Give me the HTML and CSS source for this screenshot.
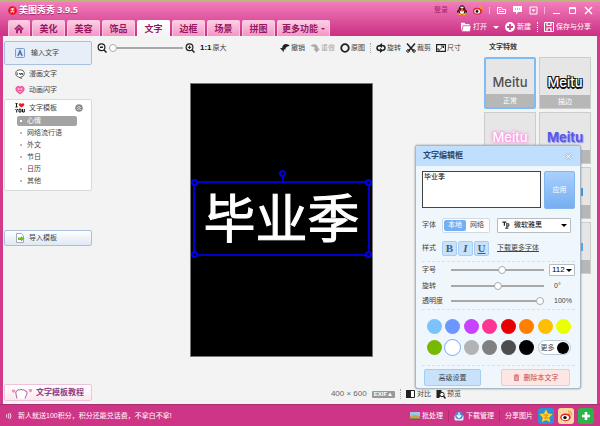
FILE: index.html
```
<!DOCTYPE html>
<html lang="zh-CN">
<head>
    <meta charset="UTF-8">
    <meta name="viewport" content="width=device-width, initial-scale=1.0">
    <title>美图秀秀 3.9.5</title>
    <link rel="stylesheet" href="styles.css">
</head>
<body>
    <header class="header">
        <div class="titlebar">
            <svg class="logo" viewBox="0 0 10 10"><circle cx="5" cy="5" r="4.8" fill="#e8101c"/><path d="M3 3.2l4-.8M5 2.6v2.6M2.8 4.2h4.4M3 6h3.6l-.5 1.8M4.2 6L3 8" stroke="#fff" stroke-width=".8" fill="none"/></svg>
            <h1>美图秀秀 3.9.5</h1>
            <a class="login" href="#">登录</a>
            <svg class="i10" viewBox="0 0 10 10"><ellipse cx="5" cy="5.5" rx="3.6" ry="4" fill="#1b1b22"/><circle cx="5" cy="2.8" r="2.6" fill="#1b1b22"/><path d="M1.500 5L.3 7.500M8.500 5l1.200 2.500" stroke="#1b1b22" stroke-width="1.400"/><ellipse cx="5" cy="6.8" rx="2.2" ry="2.2" fill="#fff"/><path d="M2 4.6q3 1.6 6 0v1.2q-3 1.4-6 0z" fill="#e02020"/><circle cx="4.2" cy="2.4" r=".8" fill="#fff"/><circle cx="5.8" cy="2.4" r=".8" fill="#fff"/><path d="M3.400 3.400h3.200L5 4.400z" fill="#ffb400"/><path d="M1.400 9.200h3M5.600 9.200h3" stroke="#ffb400" stroke-width="1.400"/></svg>
            <svg class="i10 weibo" viewBox="0 0 10 10"><ellipse cx="4.4" cy="6.2" rx="4.4" ry="3.400" fill="#e0202a"/><ellipse cx="4.2" cy="6.4" rx="2.9" ry="2.100" fill="#fff"/><circle cx="4" cy="6.4" r="1.4" fill="#111"/><path d="M6.200 .9q3.400 0 3.100 3.300M6.400 2.6q1.500 0 1.400 1.500" stroke="#f79a1c" stroke-width="1" fill="none"/></svg>
            <i class="bar"></i>
            <button class="win" aria-label="换肤"><svg viewBox="0 0 9 9"><path d="M.5 1.500h4l1 2h3v4h-8zM2 3.500h2M2 5.500h5" fill="none" stroke="#fff"/></svg></button>
            <button class="win" aria-label="反馈"><svg viewBox="0 0 9 9"><path d="M0 0h9v6H5L3 8.500V6H0z" fill="#fff"/><path d="M2 3h1M4 3h1M6 3h1" stroke="#e05a9f"/></svg></button>
            <button class="win" aria-label="菜单"><svg viewBox="0 0 9 9"><path d="M1 1h7v7H1z" fill="none" stroke="#fff"/><path d="M2.500 3.500h4l-2 2.500z" fill="#fff"/></svg></button>
            <i class="bar"></i>
            <button class="win" aria-label="最小化"><svg viewBox="0 0 9 9"><path d="M1 7.500h7" stroke="#fff"/></svg></button>
            <button class="win" aria-label="最大化"><svg viewBox="0 0 9 9"><path d="M1.500 1.500h6v6h-6zM1 2.500h7" fill="none" stroke="#fff"/></svg></button>
            <button class="win" aria-label="关闭"><svg viewBox="0 0 9 9"><path d="M1 1l7 7M8 1L1 8" stroke="#fff" stroke-width="1.4"/></svg></button>
        </div>
        <div class="navrow">
            <nav class="tabs">
                <a class="tab home" href="#" aria-label="首页"><svg viewBox="0 0 10 10"><path d="M.8 5.400L5 1.200l4.200 4.200" fill="none" stroke="#a3246b" stroke-width="1.500"/><path d="M2 5.800L5 3l3 2.800V9.200H6V6.600H4v2.600H2z" fill="#a3246b"/></svg></a>
                <a class="tab" href="#">美化</a>
                <a class="tab" href="#">美容</a>
                <a class="tab" href="#">饰品</a>
                <a class="tab active" href="#">文字</a>
                <a class="tab" href="#">边框</a>
                <a class="tab" href="#">场景</a>
                <a class="tab" href="#">拼图</a>
                <a class="tab more" href="#">更多功能<i class="caret"></i></a>
            </nav>
            <div class="file-actions">
                <button><svg viewBox="0 0 10 10"><path d="M0 9V.8h3.500l1 1.200h4v1.500H2z" fill="#fff"/><path d="M2.200 3.800H10L9 9.500H.8z" fill="#fff" stroke="#d5488f" stroke-width=".5"/></svg>打开<i class="caret"></i></button>
                <button><svg viewBox="0 0 10 10"><circle cx="5" cy="5" r="5" fill="#fff"/><path d="M5 2v6M2 5h6" stroke="#d5408e" stroke-width="1.800"/></svg>新建</button>
                <i class="dots light"></i>
                <button><svg viewBox="0 0 10 10"><path d="M.5.500h9v9h-9z" fill="none" stroke="#fff"/><path d="M3 .5v3h4v-3M3 9.500V6h4v3.500" fill="none" stroke="#fff" stroke-width="1.200"/></svg>保存与分享</button>
            </div>
        </div>
    </header>

    <main class="main">
        <aside class="sidebar">
            <button class="side-btn big">
                <svg viewBox="0 0 10 10"><rect x=".5" y=".5" width="9" height="9" rx="1" fill="#dce8f8" stroke="#7f9cc8"/><path d="M2.800 8L5 2.500 7.200 8M3.600 6h2.800" fill="none" stroke="#4468a8" stroke-width="1.200"/></svg>
                输入文字
            </button>
            <a class="side-link" href="#">
                <svg viewBox="0 0 10 10"><path d="M2 1.500q3-1.500 6 0 2 2 1 4.500-1 2-3.500 2L6.500 9.500 3.500 8Q.5 7 .7 4.500.8 2.500 2 1.500z" fill="#fff" stroke="#555" stroke-width=".9"/><path d="M2.200 3.500v2.500M4 4.500h1.200V6M6 6V4.500h1.500V6" stroke="#222" stroke-width=".8" fill="none"/></svg>
                漫画文字
            </a>
            <a class="side-link" href="#">
                <svg viewBox="0 0 10 10"><path d="M5 9.500Q-1 6 .8 2.500 3-.5 5 1.800 7-.5 9.200 2.500 11 6 5 9.500z" fill="#f3589f"/><path d="M2.500 3l2 1-2 1M7.500 3l-2 1 2 1M3.500 6.500q1.500 1 3 0" stroke="#ffd9ea" stroke-width=".8" fill="none"/></svg>
                动画闪字
            </a>
            <section class="tree">
                <h2>
                    <svg viewBox="0 0 10 10"><path d="M.5.600h2M1.500.600v3.400M.5 4h2" stroke="#111"/><path d="M6.500 4.500Q2.500 2 4.200.5 5.600-.4 6.500 1 7.400-.4 8.800.5 10.500 2 6.500 4.500z" fill="#f01818"/><path d="M.5 6l1.200 1.500L2.900 6M1.700 7.500V9.500M4 6.200h2v2.800H4zM7.500 6v3h1.800V6" stroke="#111" fill="none"/></svg>
                    文字模板
                    <button aria-label="收起"><svg viewBox="0 0 8 8"><circle cx="4" cy="4" r="3.800" fill="#8b8b8b"/><path d="M2.300 4L4 2.300 5.700 4M2.300 6L4 4.300 5.700 6" stroke="#fff" stroke-width=".8" fill="none"/></svg></button>
                </h2>
                <ul>
                    <li class="selected"><a href="#">心情</a></li>
                    <li><a href="#">网络流行语</a></li>
                    <li><a href="#">外文</a></li>
                    <li><a href="#">节日</a></li>
                    <li><a href="#">日历</a></li>
                    <li><a href="#">其他</a></li>
                </ul>
            </section>
            <button class="side-btn import">
                <svg viewBox="0 0 10 10"><path d="M1.500.5h5l2 2v7h-7z" fill="#fff" stroke="#aab"/><path d="M3 4.500h3V3l3.500 2.700L6 8.400V7H3z" fill="#6cc122"/></svg>
                导入模板
            </button>
            <button class="tutorial">
                <svg viewBox="0 0 22 12"><path d="M6 11.500L5 7q-1-3 1-3 .5-2 2.500-1 1.500-1.500 3 0 2-1 2.500 1 2.500-.5 2 2.500l-2 5" fill="#fff" stroke="#9d5796" stroke-width=".9"/><path d="M2.500 6Q0 4 1 2.800q1-.8 1.500.2.5-1 1.500-.2Q5 4 2.500 6zM19.500 5.500Q17 3.500 18 2.300q1-.8 1.500.2.5-1 1.500-.2 1 1.200-1.500 3.200z" fill="#f48cb8"/></svg>
                文字模板教程
            </button>
        </aside>

        <section class="work">
            <div class="toolbar">
                <button aria-label="缩小"><svg viewBox="0 0 10 10"><circle cx="4.500" cy="4.300" r="3.400" fill="none" stroke="#222" stroke-width="1.200"/><path d="M7 7l2.500 2.500M3 4.300h3" stroke="#222" stroke-width="1.500"/></svg></button>
                <input class="range zoom" type="range" min="0" max="100" value="0" aria-label="缩放">
                <button aria-label="放大"><svg viewBox="0 0 10 10"><circle cx="4.500" cy="4.300" r="3.400" fill="none" stroke="#222" stroke-width="1.200"/><path d="M7 7l2.500 2.500" stroke="#222" stroke-width="1.500"/><path d="M2.800 4.300h3.400M4.500 2.600V6" stroke="#222"/></svg></button>
                <button class="origin"><b>1:1</b>原大</button>
                <button><svg viewBox="0 0 10 10"><path d="M0 5L3.800 9.200V6.600H5.500Q5 4 9.800 2.800 8 .6 5.500 1 2.300 1.400 2.200 5z" fill="#222"/></svg>撤销</button>
                <button class="off"><svg viewBox="0 0 10 10"><path d="M10 5.800L6.600 9.600 3.400 5.800h1.800Q5 3.800 .4 3 2 .8 4.800 1.200 8 1.800 8.200 5.800z" fill="#aaa"/></svg>重做</button>
                <button><svg viewBox="0 0 10 10"><circle cx="5" cy="5" r="3.800" fill="none" stroke="#222" stroke-width="1.800"/></svg>原图</button>
                <i class="dots"></i>
                <button><svg viewBox="0 0 10 10"><path d="M5 2.500Q1 2.500 1 5t3 2.500M5 7.500q4 0 4-2.500T6 2.500" fill="none" stroke="#222" stroke-width="1.500"/><path d="M6 0v5L3 2.500zM4 5v5l3-2.500z" fill="#222"/></svg>旋转</button>
                <button><svg viewBox="0 0 10 10"><path d="M1 .5L7.500 8M9 .5L2.500 8" stroke="#222" stroke-width="1.500"/><circle cx="2" cy="8" r="1.300" fill="none" stroke="#222"/><circle cx="8" cy="8" r="1.300" fill="none" stroke="#222"/></svg>裁剪</button>
                <button><svg viewBox="0 0 10 10"><path d="M.6 1.600h8.800v6.800H.6z" fill="#fff" stroke="#222" stroke-width="1.200"/><path d="M4 6.500l3-3M5 3h2.500v2M2 5v2h2" fill="none" stroke="#222"/></svg>尺寸</button>
            </div>
            <div class="stage">
                <div class="photo">
                    <div class="textbox">毕业季<i class="knob tl"></i><i class="knob tr"></i><i class="knob bl"></i><i class="knob br"></i><i class="knob rot"></i></div>
                </div>
            </div>
            <div class="status">
                <span class="size">400 × 600</span>
                <button class="exif">EXIF▲</button>
                <i class="dots"></i>
                <button><svg viewBox="0 0 10 10"><path d="M.5 1.500h8v7h-8z" fill="#fff" stroke="#222"/><path d="M0 1h5v8H0z" fill="#222"/></svg>对比</button>
                <button><svg viewBox="0 0 10 10"><path d="M.5 1h5v5L3 9H.5z" fill="#222"/><circle cx="6" cy="5.500" r="2.200" fill="#fff" stroke="#222"/><path d="M7.500 7L9.500 9.500" stroke="#222" stroke-width="1.500"/></svg>预览</button>
            </div>
        </section>

        <aside class="effects">
            <h2>文字特效</h2>
            <div class="grid">
                <button class="fx on"><span class="plain">Meitu</span><em>正常</em></button>
                <button class="fx"><span class="stroke">Meitu</span><em>描边</em></button>
                <button class="fx"><span class="glow">Meitu</span><em></em></button>
                <button class="fx"><span class="shade">Meitu</span><em></em></button>
                <button class="fx" aria-label="渐变"><span></span><em></em></button>
                <button class="fx" aria-label="天空"><span><svg viewBox="0 0 36 8"><path d="M0 0h36v8H0z" fill="#3c94e6"/></svg></span><em></em></button>
                <button class="fx" aria-label="倒影"><span></span><em></em></button>
                <button class="fx" aria-label="海洋"><span><svg viewBox="0 0 36 8"><path d="M0 0h36v8H0z" fill="#4fa8f0"/></svg></span><em></em></button>
            </div>
        </aside>

        <form class="dialog">
            <div class="dialog-head">
                <h2>文字编辑框</h2>
                <button type="button" aria-label="关闭"><svg viewBox="0 0 10 10"><path d="M1.500 1.500l7 7M8.500 1.500l-7 7" stroke="#8db4da" stroke-width="2.600"/><path d="M1.500 1.500l7 7M8.500 1.500l-7 7" stroke="#f4faff" stroke-width="1.200"/></svg></button>
            </div>
            <div class="dialog-body">
                <div class="entry">
                    <textarea aria-label="文字内容">毕业季</textarea>
                    <button type="button" class="apply">应用</button>
                </div>
                <div class="row font-row">
                    <span class="lbl">字体</span>
                    <div class="seg"><button type="button" class="on">本地</button><button type="button">网络</button></div>
                    <div class="pick">
                        <svg viewBox="0 0 10 10"><path d="M.5 1.500h5M3 1.500V6" stroke="#222" stroke-width="1.500"/><path d="M5 3.500h3.500v3H6M6 3.500V9M4 9h4" fill="none" stroke="#222" stroke-width="1.200"/></svg>
                        <select aria-label="字体"><option>微软雅黑</option></select>
                        <i class="caret"></i>
                    </div>
                </div>
                <div class="row style-row">
                    <span class="lbl">样式</span>
                    <div class="biu"><button type="button"><b>B</b></button><button type="button"><i>I</i></button><button type="button"><u>U</u></button></div>
                    <a href="#">下载更多字体</a>
                </div>
                <div class="sliders">
                    <label for="fs">字号</label>
                    <input class="range" id="fs" type="range" min="0" max="100" value="55">
                    <div class="pick num"><select aria-label="字号数值"><option>112</option></select><i class="caret"></i></div>
                    <label for="rot">旋转</label>
                    <input class="range" id="rot" type="range" min="0" max="100" value="50">
                    <output for="rot">0°</output>
                    <label for="op">透明度</label>
                    <input class="range" id="op" type="range" min="0" max="100" value="100">
                    <output for="op">100%</output>
                </div>
                <div class="swatches">
                    <button type="button" class="sky" aria-label="天蓝"></button>
                    <button type="button" class="cornflower" aria-label="蓝"></button>
                    <button type="button" class="violet" aria-label="紫"></button>
                    <button type="button" class="pink" aria-label="粉"></button>
                    <button type="button" class="red" aria-label="红"></button>
                    <button type="button" class="orange" aria-label="橙"></button>
                    <button type="button" class="amber" aria-label="琥珀"></button>
                    <button type="button" class="yellow" aria-label="黄"></button>
                    <button type="button" class="green" aria-label="绿"></button>
                    <button type="button" class="white" aria-label="白"></button>
                    <button type="button" class="grey1" aria-label="浅灰"></button>
                    <button type="button" class="grey2" aria-label="灰"></button>
                    <button type="button" class="grey3" aria-label="深灰"></button>
                    <button type="button" class="black" aria-label="黑"></button>
                    <button type="button" class="more-color">更多<i></i></button>
                </div>
                <div class="dialog-foot">
                    <button type="button" class="adv">高级设置</button>
                    <button type="button" class="del"><svg viewBox="0 0 8 8"><path d="M1 1.500h6M3 .5h2M1.800 2.500h4.400v5H1.800zM3.300 3v4M4.700 3v4" fill="none" stroke="#c9605f" stroke-width=".9"/></svg>删除本文字</button>
                </div>
            </div>
        </form>
    </main>

    <footer class="footer">
        <svg class="horn" viewBox="0 0 8 10"><path d="M1 3v4M3 2q2 3 0 6M5 1q3 4 0 8" fill="none" stroke="#fff"/></svg>
        <p>新人就送100积分，积分还能兑话费，不拿白不拿!</p>
        <button><svg viewBox="0 0 10 10"><rect y="1" width="10" height="8" fill="#9cc8e8"/><path d="M0 5l4-1 6 1v4H0z" fill="#c8a050"/><path d="M0 7.500h10V9H0z" fill="#3f7a4a"/></svg>批处理</button>
        <i class="bar"></i>
        <button><svg viewBox="0 0 10 10"><rect x=".5" y="4" width="9" height="5.500" rx="1.500" fill="#e8f2fb"/><circle cx="5" cy="4.500" r="3.800" fill="#3f93dc"/><path d="M5 1.500V6M2.800 4.200L5 6.600l2.200-2.400" fill="none" stroke="#fff" stroke-width="1.300"/></svg>下载管理</button>
        <i class="bar"></i>
        <span>分享图片</span>
        <div class="shares">
            <a class="share qzone" href="#" aria-label="QQ空间"><svg viewBox="0 0 14 14"><path d="M7 .3l2 4.200 4.700.6-3.400 3.300.9 4.800L7 10.900l-4.200 2.300.9-4.800L.3 5.100 5 4.500z" fill="#ffd21e"/><path d="M4.500 6h4.300L5.500 9h4" fill="none" stroke="#d9822a"/></svg></a>
            <a class="share sina" href="#" aria-label="新浪微博"><svg viewBox="0 0 14 14"><ellipse cx="6.500" cy="8.300" rx="5.200" ry="3.900" fill="#e0202a"/><ellipse cx="6.300" cy="8.600" rx="3.700" ry="2.600" fill="#fff"/><circle cx="6" cy="8.600" r="1.700" fill="#111"/><path d="M9 2.200q3.800-.2 3.400 3.700M9 4q1.900 0 1.700 1.900" fill="none" stroke="#f08a1c"/></svg></a>
            <a class="share add" href="#" aria-label="更多分享"><svg viewBox="0 0 14 14"><path d="M7 3v8M3 7h8" stroke="#fff" stroke-width="2.600"/></svg></a>
        </div>
    </footer>
</body>
</html>
```
FILE: styles.css
```
* {
    box-sizing: border-box;
}
body {
    margin: 0;
    min-height: 100vh;
    display: flex;
    flex-direction: column;
    font-family: "Liberation Sans", "Noto Sans CJK SC", sans-serif;
    font-size: 7px;
    line-height: 10px;
    color: #444;
    background: #f3f3f3;
}
h1, h2, p, ul {
    margin: 0;
    padding: 0;
    font-size: inherit;
}
ul {
    list-style: none;
}
a {
    color: inherit;
    text-decoration: none;
}
svg {
    display: block;
    flex: none;
}
button {
    display: flex;
    align-items: center;
    padding: 0;
    border: 0;
    background: none;
    font: inherit;
    color: inherit;
    white-space: nowrap;
    cursor: pointer;
}
.caret {
    border: 3px solid transparent;
    border-top-color: currentColor;
    border-bottom: 0;
}
.dots {
    height: 10px;
    border-left: 1px dotted #aaa;
}
.dots.light {
    border-color: #fff;
}

/* header */
.header {
    border-top: 2px solid #b9b57c;
    background: linear-gradient(#f27dba, #cb2f83);
    color: #fff;
}
.titlebar {
    display: flex;
    align-items: center;
    height: 16px;
    padding: 0 7px 0 8px;
}
.logo {
    width: 9px;
    height: 9px;
    margin-right: 2px;
}
.titlebar h1 {
    flex: 1;
    font-family: "Open Sans", "Noto Sans CJK SC", sans-serif;
    font-size: 9px;
    text-shadow: 0 1px 1px #9c2765;
}
.login {
    margin-right: 9px;
    color: #a3246b;
}
.i10 {
    width: 10px;
    height: 10px;
    margin-right: 6px;
}
.bar {
    width: 1px;
    height: 7px;
    background: #f9b6d8;
}
.win {
    margin-left: 7px;
}
.win svg {
    width: 9px;
    height: 9px;
}
.titlebar .win + .bar {
    margin-left: 6px;
}
.navrow {
    display: flex;
    align-items: flex-end;
    justify-content: space-between;
    height: 18px;
    padding: 0 9px 0 8px;
}
.tabs {
    display: flex;
    gap: 2px;
}
.tab {
    display: flex;
    align-items: center;
    justify-content: center;
    width: 33px;
    height: 16px;
    border: 1px solid #fbc9e1;
    border-bottom: 0;
    border-radius: 2px 2px 0 0;
    background: linear-gradient(#fbcfe4, #f395c6);
    font-size: 9px;
    font-weight: bold;
    color: #97175f;
}
.tab svg {
    width: 10px;
    height: 10px;
}
.tab.home {
    width: 22px;
}
.tab.more {
    width: 53px;
    gap: 3px;
}
.tab .caret {
    border-width: 2px;
    border-bottom: 0;
}
.tab.active {
    border-color: #fff;
    background: linear-gradient(#fff, #f3f3f3);
}
.file-actions {
    display: flex;
    align-items: center;
    gap: 6px;
    height: 18px;
}
.file-actions button {
    gap: 2px;
}
.file-actions svg {
    width: 10px;
    height: 10px;
}
.file-actions .caret {
    margin-left: 4px;
}

/* main */
.main {
    position: relative;
    flex: 1;
    display: flex;
    border: solid #d23a8a;
    border-width: 0 3px;
}
.sidebar {
    display: flex;
    flex-direction: column;
    width: 90px;
    padding: 5px 1px 3px;
}
.sidebar svg {
    width: 10px;
    height: 10px;
}
.side-btn {
    gap: 4px;
    height: 16px;
    padding-left: 10px;
    border: 1px solid #a9bfe0;
    border-radius: 2px;
    background: linear-gradient(#fff, #dfe8f5);
}
.side-btn.big {
    gap: 6px;
    height: 24px;
    margin-bottom: 1px;
    background: #e7eef7;
}
.side-link {
    display: flex;
    align-items: center;
    gap: 4px;
    height: 16px;
    padding-left: 11px;
}
.tree {
    height: 92px;
    margin-top: 1px;
    padding: 0 10px;
    border: 1px solid #d9d9d9;
    border-radius: 2px;
    background: #fff;
}
.tree h2 {
    display: flex;
    align-items: center;
    gap: 4px;
    height: 15px;
    font-weight: normal;
}
.tree button {
    margin-left: auto;
    margin-right: -2px;
}
.tree button svg {
    width: 8px;
    height: 8px;
}
.tree li {
    height: 12px;
    padding: 1px 4px 1px 2px;
}
.tree li a {
    display: flex;
    align-items: center;
    gap: 5px;
    height: 10px;
    padding-left: 3px;
    border-radius: 2px;
}
.tree li a::before {
    content: "";
    width: 2px;
    height: 2px;
    background: #bbb;
}
.tree li.selected a {
    background: #a3a3a3;
    color: #fff;
}
.tree li.selected a::before {
    background: #fff;
}
.import {
    margin-top: 39px;
}
.tutorial {
    gap: 3px;
    height: 17px;
    margin-top: auto;
    padding-left: 6px;
    border: 1px solid #eec3dc;
    border-radius: 2px;
    background: linear-gradient(#fff, #fbe7f1);
    font-size: 8px;
    font-weight: bold;
    color: #8d3f80;
}
.tutorial svg {
    width: 22px;
    height: 12px;
}

.work {
    flex: 1;
    display: flex;
    flex-direction: column;
    min-width: 0;
}
.toolbar {
    display: flex;
    align-items: center;
    gap: 5px;
    height: 24px;
    padding: 0 23px 0 4px;
}
.toolbar button, .status button {
    gap: 1px;
}
.toolbar svg, .status svg {
    width: 10px;
    height: 10px;
}
.toolbar .origin {
    margin-right: auto;
}
.origin b {
    font-size: 8px;
    color: #111;
}
.toolbar .off {
    color: #aaa;
}
.range {
    appearance: none;
    width: 100%;
    height: 8px;
    margin: 0;
    background: linear-gradient(#a8a8a8, #a8a8a8) center / 100% 2px no-repeat;
}
.range::-webkit-slider-thumb {
    appearance: none;
    width: 8px;
    height: 8px;
    border: 1px solid #aaa;
    border-radius: 50%;
    background: #fff;
}
.range.zoom {
    width: 74px;
    margin: 0 -3px;
}
.stage {
    flex: 1;
    display: flex;
    justify-content: center;
    padding: 23px 14px 0 0;
}
.photo {
    display: flex;
    align-items: center;
    justify-content: center;
    width: 183px;
    height: 274px;
    padding-bottom: 4px;
    border: 1px solid #777;
    background: #000;
}
.textbox {
    position: relative;
    width: 177px;
    height: 75px;
    border: 2px solid #0000c8;
    font-family: "Noto Sans CJK SC", sans-serif;
    font-size: 52px;
    line-height: 66px;
    text-align: center;
    color: #fff;
    -webkit-text-stroke: 1px #fff;
}
.knob {
    position: absolute;
    width: 7px;
    height: 7px;
    border: 2px solid #0000e0;
    border-radius: 50%;
    background: #000;
}
.tl { left: -4px; top: -4px; }
.tr { right: -4px; top: -4px; }
.bl { left: -4px; bottom: -4px; }
.br { right: -4px; bottom: -4px; }
.rot {
    left: calc(50% - 3px);
    top: -13px;
}
.rot::after {
    content: "";
    position: absolute;
    left: 1px;
    top: 5px;
    height: 5px;
    border-left: 2px solid #0000c8;
}
.status {
    display: flex;
    align-items: center;
    justify-content: flex-end;
    gap: 5px;
    height: 20px;
    padding-right: 23px;
}
.size {
    font-size: 8px;
    color: #666;
}
.status .exif {
    height: 7px;
    padding: 0 2px;
    border-radius: 1px;
    background: #999;
    font-size: 6px;
    font-weight: bold;
    color: #fff;
}

.effects {
    width: 113px;
    padding: 6px 0 0;
}
.effects h2 {
    margin: 0 0 5px 5px;
    color: #333;
}
.grid {
    display: grid;
    grid-template-columns: 52px 52px;
    gap: 3px;
}
.fx {
    flex-direction: column;
    height: 52px;
    border: 1px solid #ccc;
    background: #e6e6e6;
}
.fx.on {
    border: 2px solid #7dbcf8;
    border-radius: 2px;
}
.fx span {
    flex: 1;
    display: flex;
    align-items: center;
    padding-top: 10px;
    font-family: Inter, "Liberation Sans", sans-serif;
    font-size: 13px;
    font-weight: 500;
    color: #505050;
}
.fx svg {
    width: 36px;
    height: 8px;
}
.fx em {
    align-self: stretch;
    height: 13px;
    line-height: 13px;
    background: #b7b7b7;
    font-style: normal;
    color: #fff;
}
.fx .stroke {
    color: #fff;
    text-shadow: 1px 1px #111, -1px -1px #111, 1px -1px #111, -1px 1px #111, 0 2px #111;
}
.fx .glow {
    color: #fff;
    text-shadow: 0 0 2px #ff8de0, 0 0 3px #ff8de0, 0 0 4px #ff8de0;
}
.fx .shade {
    font-weight: bold;
    color: #5a5ae6;
    text-shadow: 1px 1px 1px #8a8af0;
}

/* text edit dialog */
.dialog {
    position: absolute;
    top: 109px;
    right: 16px;
    width: 166px;
    border: 1px solid #a9b8c4;
    border-radius: 3px;
    background: #eff7fc;
    box-shadow: 0 0 2px #888;
}
.dialog-head {
    display: flex;
    align-items: center;
    justify-content: space-between;
    height: 20px;
    padding: 0 7px;
    border-radius: 3px 3px 0 0;
    background: #c0dfff;
}
.dialog-head h2 {
    font-size: 8px;
    color: #2d4a68;
}
.dialog-head svg {
    width: 9px;
    height: 9px;
}
.dialog-body {
    padding: 5px 5px 2px 6px;
}
.entry {
    display: flex;
    gap: 3px;
}
.entry textarea {
    flex: 1;
    min-width: 0;
    height: 37px;
    padding: 0 1px;
    border: 1px solid #444;
    resize: none;
    font: inherit;
    color: #000;
}
.apply {
    justify-content: center;
    width: 31px;
    height: 38px;
    border: 1px solid #83b5ee;
    border-radius: 2px;
    background: linear-gradient(#a9d0fc, #76aef2);
    color: #fff;
}
.row {
    display: flex;
    align-items: center;
    height: 24px;
}
.font-row {
    margin-top: 4px;
}
.style-row {
    height: 22px;
}
.lbl {
    width: 20px;
}
.seg {
    display: flex;
    width: 48px;
    height: 15px;
    margin-right: 7px;
    padding: 1px;
    border: 1px solid #cfdbe4;
    border-radius: 2px;
    background: #fff;
}
.seg button {
    flex: 1;
    justify-content: center;
    border-radius: 2px;
}
.seg .on {
    background: #72b1f5;
    color: #fff;
}
.pick {
    display: flex;
    align-items: center;
    gap: 4px;
    width: 74px;
    height: 15px;
    padding: 0 3px 0 4px;
    border: 1px solid #b5bcc2;
    border-radius: 1px;
    background: #fff;
    color: #000;
}
.pick svg {
    width: 8px;
    height: 8px;
}
.pick select {
    appearance: none;
    flex: 1;
    min-width: 0;
    padding: 0;
    border: 0;
    background: none;
    font: inherit;
    color: inherit;
}
.biu {
    display: flex;
    gap: 1px;
    margin-right: 8px;
}
.biu button {
    justify-content: center;
    width: 15px;
    height: 15px;
    border: 1px solid #a9cdf0;
    border-radius: 2px;
    background: #c9e2fb;
    font-family: "Liberation Serif", serif;
    font-size: 11px;
    font-weight: bold;
    color: #3f5f80;
}
.style-row a {
    text-decoration: underline;
}
.sliders {
    display: grid;
    grid-template-columns: 24px 1fr 26px;
    grid-template-rows: 16px 15px 16px;
    align-items: center;
    column-gap: 5px;
    margin-top: 2px;
    border: dashed #d8e2e8;
    border-width: 1px 0;
}
.sliders output {
    padding-left: 5px;
}
.sliders .num {
    width: 26px;
    height: 12px;
    gap: 0;
    padding: 0 2px;
    font-size: 8px;
}
.swatches {
    display: grid;
    grid-template-columns: repeat(8, 15px);
    justify-content: space-between;
    row-gap: 6px;
    padding: 9px 4px 10px 5px;
}
.swatches button {
    height: 15px;
    border-radius: 50%;
}
.sky { background: #7cc2ff; }
.cornflower { background: #6c97ff; }
.violet { background: #c843ff; }
.pink { background: #ff3596; }
.red { background: #e80000; }
.orange { background: #ff8000; }
.amber { background: #ffbf00; }
.yellow { background: #eaff00; }
.green { background: #76b900; }
.swatches .white {
    background: #fff;
    outline: 1px solid #79aeea;
}
.grey1 { background: #b3b3b3; }
.grey2 { background: #808080; }
.grey3 { background: #4d4d4d; }
.black { background: #000; }
.swatches .more-color {
    grid-column: span 2;
    justify-content: space-between;
    padding: 0 1px 0 2px;
    border: 1px solid #b5cbdc;
    border-radius: 8px;
    background: #fff;
}
.more-color i {
    width: 12px;
    height: 12px;
    border-radius: 50%;
    background: #000;
}
.dialog-foot {
    display: flex;
    justify-content: space-between;
    padding: 3px 5px 0 2px;
    border-top: 1px dashed #d8e2e8;
}
.dialog-foot button {
    justify-content: center;
    gap: 4px;
    height: 17px;
    border: 1px solid #a5cdf3;
    border-radius: 2px;
}
.dialog-foot svg {
    width: 7px;
    height: 7px;
}
.dialog-foot .adv {
    width: 57px;
    background: #c8e2fc;
}
.dialog-foot .del {
    width: 69px;
    border-color: #f0c8c6;
    background: #fde6e4;
    color: #c04a4a;
}

/* footer */
.footer {
    display: flex;
    align-items: center;
    gap: 5px;
    height: 22px;
    padding: 0 6px 0 5px;
    border-top: 1px solid #a92e70;
    background: #cf3586;
    color: #fff;
}
.footer p {
    flex: 1;
}
.horn {
    width: 8px;
    height: 8px;
}
.footer button {
    gap: 2px;
}
.footer button svg {
    width: 10px;
    height: 10px;
}
.footer .bar {
    height: 12px;
    background: #b82a74;
}
.shares {
    display: flex;
    gap: 4px;
}
.share {
    padding: 1px;
    border-radius: 3px;
}
.share svg {
    width: 14px;
    height: 14px;
}
.qzone { background: #2f8fd8; }
.sina { background: #fbd9a0; }
.add { background: #2eb24a; }
```
